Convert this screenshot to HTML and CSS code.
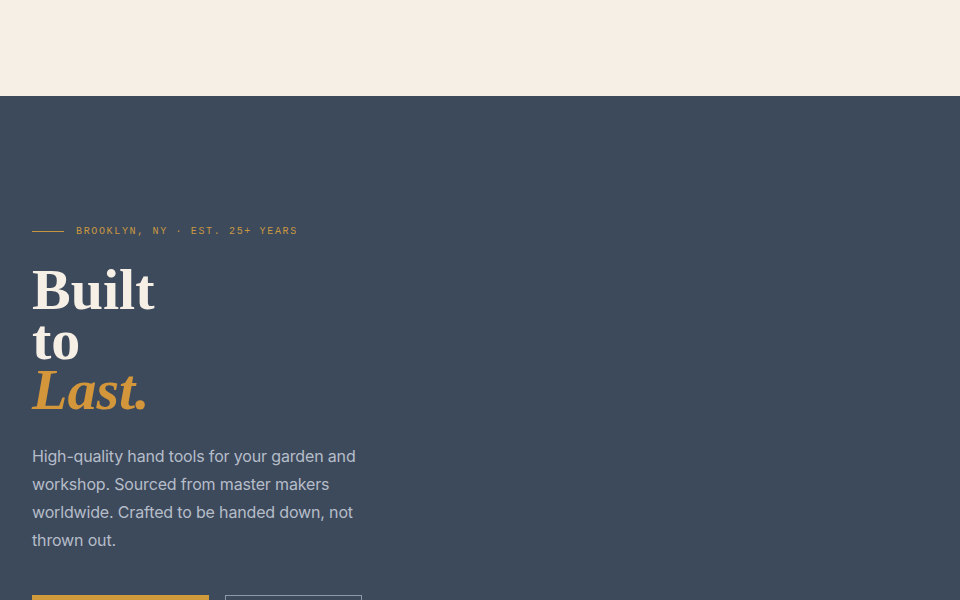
FILE: index.html
```html
<!DOCTYPE html>
<html lang="en">
<head>
<meta charset="utf-8">
<title>Built to Last</title>
<link rel="stylesheet" href="styles.css">
</head>
<body>
<header class="topbar"></header>
<section class="hero">
  <div class="hero-inner">
    <div class="eyebrow">
      <span class="eyebrow-line"></span>
      <span class="eyebrow-text">Brooklyn, NY · Est. 25+ Years</span>
    </div>
    <h1 class="title">Built<br>to<br><em>Last.</em></h1>
    <p class="lead">High-quality hand tools for your garden and workshop. Sourced from master makers worldwide. Crafted to be handed down, not thrown out.</p>
    <div class="actions">
      <a class="btn btn-primary" href="#">Shop the Collection</a>
      <a class="btn btn-outline" href="#">Our Story</a>
    </div>
  </div>
</section>
</body>
</html>
```
FILE: styles.css
```css
* { box-sizing: border-box; }
html, body { margin: 0; padding: 0; }
body {
  background: #3d4a5c;
  font-family: "Inter", "Liberation Sans", sans-serif;
}
.topbar {
  height: 96px;
  background: #f6efe6;
}
.hero {
  background: #3d4a5c;
  min-height: 504px;
}
.hero-inner {
  padding: 129px 32px 0;
}
.eyebrow {
  display: flex;
  align-items: center;
  gap: 12px;
  height: 12px;
}
.eyebrow-line {
  width: 32px;
  height: 1px;
  background: #c9963e;
}
.eyebrow-text {
  font-family: "Liberation Mono", "DejaVu Sans Mono", monospace;
  font-size: 10px;
  letter-spacing: 0.165em;
  text-transform: uppercase;
  color: #c9983f;
}
.title {
  margin: 28px 0 0;
  font-family: "Liberation Serif", "DejaVu Serif", serif;
  font-weight: 700;
  font-size: 58px;
  line-height: 50px;
  color: #f6efe6;
  letter-spacing: 0;
}
.title em {
  font-style: italic;
  color: #d4963a;
}
.lead {
  margin: 27px 0 0;
  max-width: 340px;
  font-size: 16px;
  letter-spacing: -0.01em;
  line-height: 28px;
  color: #b6bdc9;
}
.actions {
  display: flex;
  gap: 16px;
  margin-top: 41px;
}
.btn {
  display: inline-block;
  height: 48px;
  line-height: 48px;
  text-decoration: none;
  font-family: "Liberation Mono", monospace;
  font-size: 11px;
  letter-spacing: 0.15em;
  text-transform: uppercase;
  text-align: center;
}
.btn-primary {
  width: 177px;
  background: #d19a3a;
  color: #3d4a5c;
}
.btn-outline {
  width: 137px;
  border: 1px solid #8d98a8;
  color: #f6efe6;
}
```
